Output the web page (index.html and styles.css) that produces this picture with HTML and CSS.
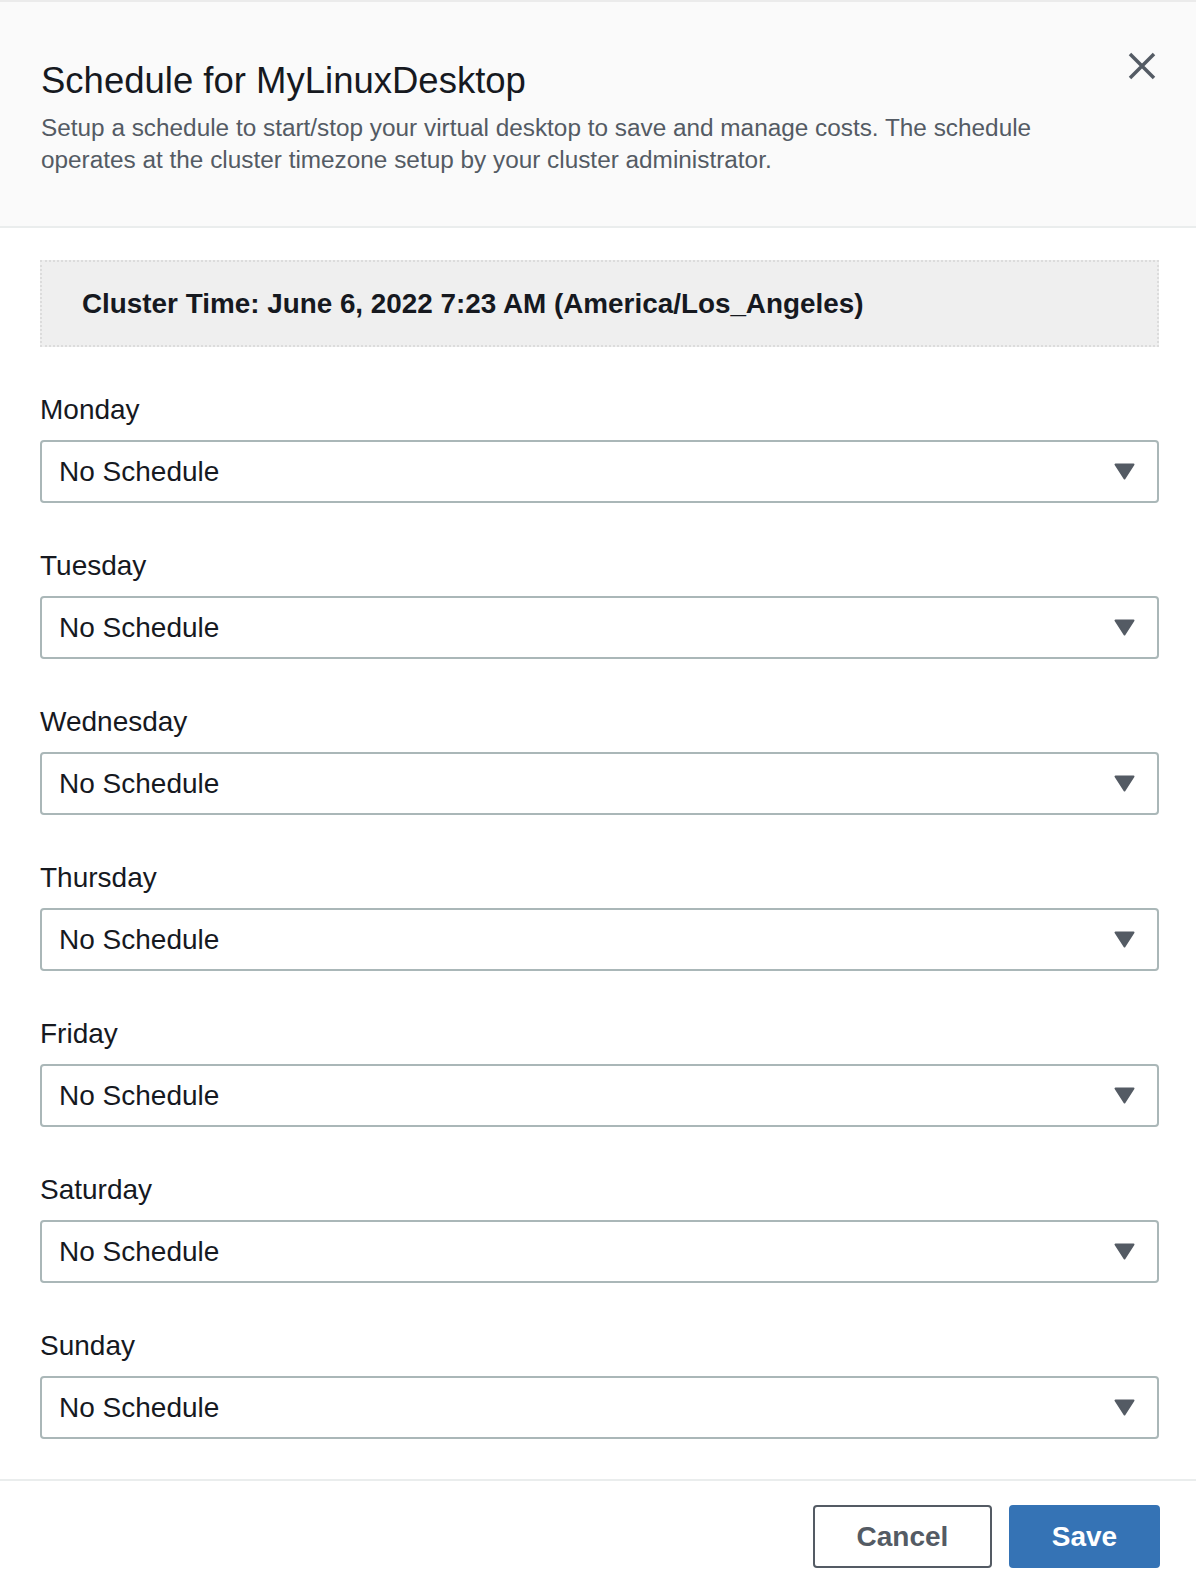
FILE: index.html
```html
<!DOCTYPE html>
<html lang="en">
<head>
<meta charset="utf-8">
<title>Schedule for MyLinuxDesktop</title>
<link rel="stylesheet" href="styles.css">
</head>
<body>
<div class="modal">
  <header class="modal-header">
    <div class="header-text">
      <h1 class="title">Schedule for MyLinuxDesktop</h1>
      <p class="desc">Setup a schedule to start/stop your virtual desktop to save and manage costs. The schedule operates at the cluster timezone setup by your cluster administrator.</p>
    </div>
    <button class="close" aria-label="Close">
      <svg width="28" height="28" viewBox="0 0 28 28"><path d="M2 2 L26 26 M26 2 L2 26" stroke="#545b64" stroke-width="3.5" stroke-linecap="butt" fill="none"/></svg>
    </button>
  </header>
  <main class="modal-body">
    <div class="cluster-time">Cluster Time: June 6, 2022 7:23 AM (America/Los_Angeles)</div>
    <div class="fields">
      <div class="field">
        <label class="label">Monday</label>
        <div class="select"><span>No Schedule</span><svg class="caret" width="21" height="17" viewBox="0 0 21 17"><path d="M1.5 1.5 L19.5 1.5 L10.5 15.5 Z" fill="#545b64" stroke="#545b64" stroke-width="2" stroke-linejoin="round"/></svg></div>
      </div>
      <div class="field">
        <label class="label">Tuesday</label>
        <div class="select"><span>No Schedule</span><svg class="caret" width="21" height="17" viewBox="0 0 21 17"><path d="M1.5 1.5 L19.5 1.5 L10.5 15.5 Z" fill="#545b64" stroke="#545b64" stroke-width="2" stroke-linejoin="round"/></svg></div>
      </div>
      <div class="field">
        <label class="label">Wednesday</label>
        <div class="select"><span>No Schedule</span><svg class="caret" width="21" height="17" viewBox="0 0 21 17"><path d="M1.5 1.5 L19.5 1.5 L10.5 15.5 Z" fill="#545b64" stroke="#545b64" stroke-width="2" stroke-linejoin="round"/></svg></div>
      </div>
      <div class="field">
        <label class="label">Thursday</label>
        <div class="select"><span>No Schedule</span><svg class="caret" width="21" height="17" viewBox="0 0 21 17"><path d="M1.5 1.5 L19.5 1.5 L10.5 15.5 Z" fill="#545b64" stroke="#545b64" stroke-width="2" stroke-linejoin="round"/></svg></div>
      </div>
      <div class="field">
        <label class="label">Friday</label>
        <div class="select"><span>No Schedule</span><svg class="caret" width="21" height="17" viewBox="0 0 21 17"><path d="M1.5 1.5 L19.5 1.5 L10.5 15.5 Z" fill="#545b64" stroke="#545b64" stroke-width="2" stroke-linejoin="round"/></svg></div>
      </div>
      <div class="field">
        <label class="label">Saturday</label>
        <div class="select"><span>No Schedule</span><svg class="caret" width="21" height="17" viewBox="0 0 21 17"><path d="M1.5 1.5 L19.5 1.5 L10.5 15.5 Z" fill="#545b64" stroke="#545b64" stroke-width="2" stroke-linejoin="round"/></svg></div>
      </div>
      <div class="field">
        <label class="label">Sunday</label>
        <div class="select"><span>No Schedule</span><svg class="caret" width="21" height="17" viewBox="0 0 21 17"><path d="M1.5 1.5 L19.5 1.5 L10.5 15.5 Z" fill="#545b64" stroke="#545b64" stroke-width="2" stroke-linejoin="round"/></svg></div>
      </div>
    </div>
  </main>
  <footer class="modal-footer">
    <button class="btn btn-cancel">Cancel</button>
    <button class="btn btn-save">Save</button>
  </footer>
</div>
</body>
</html>
```

FILE: styles.css
```css
* { box-sizing: border-box; }
html, body { margin: 0; padding: 0; background: #ffffff; }
body {
  font-family: "Liberation Sans", Arial, Helvetica, sans-serif;
  color: #16191f;
  width: 1196px;
  height: 1594px;
  overflow: hidden;
}
.modal {
  border-top: 2px solid #ebebeb;
  display: flex;
  flex-direction: column;
}
.modal-header {
  background: #fafafa;
  border-bottom: 2px solid #eaeded;
  display: flex;
  justify-content: space-between;
  align-items: flex-start;
  padding: 57px 40px 50px 41px;
}
.title {
  margin: 0;
  font-size: 36.5px;
  line-height: 44px;
  font-weight: 400;
  color: #16191f;
}
.desc {
  margin: 9px 0 0 0;
  width: 1010px;
  font-size: 24.35px;
  line-height: 32px;
  color: #545b64;
}
.close {
  background: none;
  border: none;
  padding: 0;
  margin: -7px 0 0 0;
  width: 28px;
  height: 28px;
  cursor: pointer;
}
.close svg { display: block; }
.modal-body {
  padding: 32px 37px 40px 40px;
}
.cluster-time {
  height: 87px;
  background: #efefef;
  border: 2px dotted #dcdcdc;
  display: flex;
  align-items: center;
  padding-left: 40px;
  font-size: 27.85px;
  font-weight: 700;
  color: #16191f;
}
.fields {
  display: flex;
  flex-direction: column;
  gap: 46px;
  margin-top: 46px;
}
.field {
  display: flex;
  flex-direction: column;
  gap: 13px;
}
.label {
  font-size: 28px;
  line-height: 34px;
  color: #16191f;
}
.select {
  height: 63px;
  border: 2px solid #aab7b8;
  border-radius: 4px;
  background: #fff;
  display: flex;
  align-items: center;
  justify-content: space-between;
  padding: 0 22px 0 17px;
  font-size: 28px;
  color: #16191f;
}
.caret { display: block; }
.modal-footer {
  border-top: 2px solid #eaeded;
  display: flex;
  justify-content: flex-end;
  gap: 17px;
  padding: 24px 36px 25px 0;
}
.btn {
  height: 63px;
  border-radius: 4px;
  font-family: "Liberation Sans", Arial, Helvetica, sans-serif;
  font-size: 28px;
  font-weight: 700;
  cursor: pointer;
}
.btn-cancel {
  width: 179px;
  background: #fff;
  border: 2px solid #545b64;
  color: #545b64;
}
.btn-save {
  width: 151px;
  background: #3573b5;
  border: 2px solid #3573b5;
  color: #fff;
}
```
